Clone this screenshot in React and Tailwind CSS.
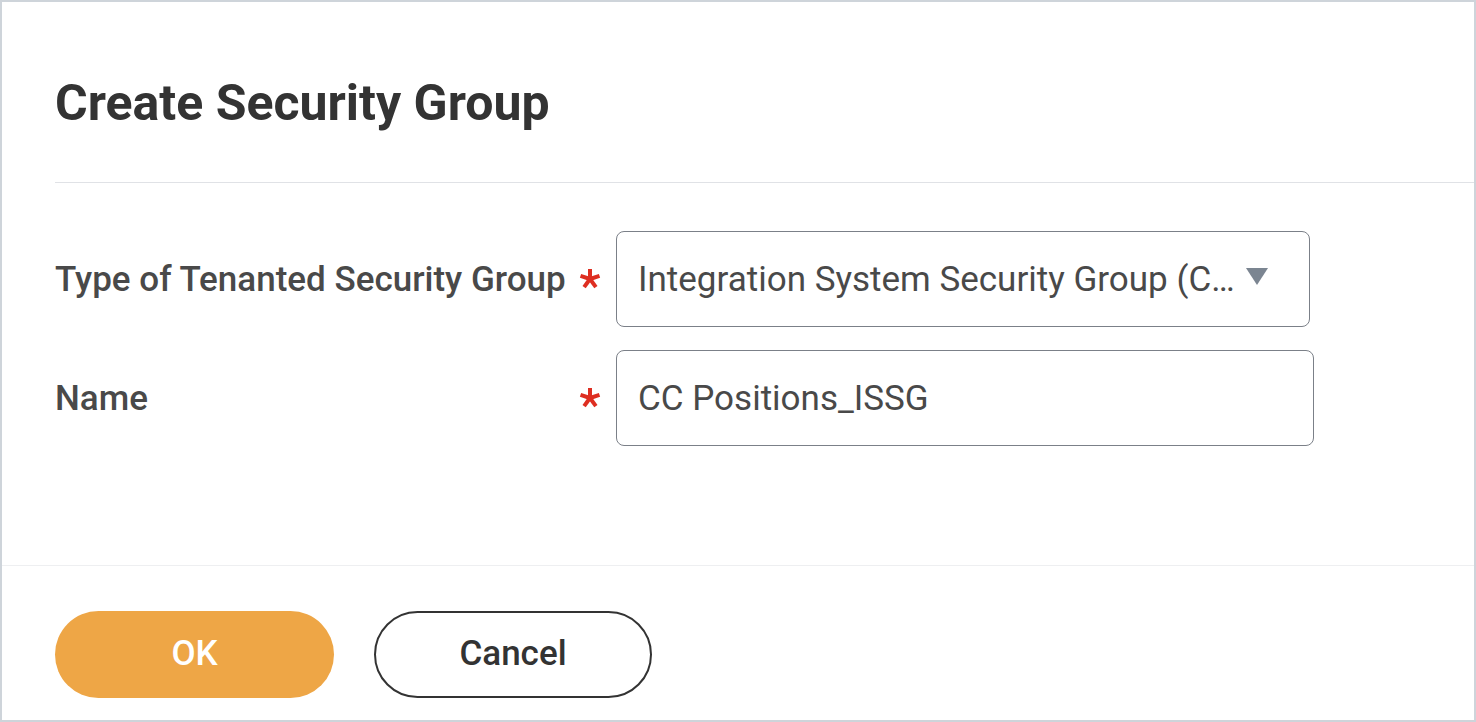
import React from "react";

function Asterisk() {
  return (
    <svg width="22" height="20" viewBox="-11 -10 22 20" className="block">
      <g stroke="#de2e21" strokeWidth="4" strokeLinecap="butt">
        <line x1="0" y1="0" x2="0" y2="-10" />
        <line x1="0" y1="0" x2="9.5" y2="-3.1" />
        <line x1="0" y1="0" x2="-9.5" y2="-3.1" />
        <line x1="0" y1="0" x2="5.9" y2="8.1" />
        <line x1="0" y1="0" x2="-5.9" y2="8.1" />
      </g>
    </svg>
  );
}

export default function App() {
  return (
    <div
      className="w-[1476px] h-[722px] border-2 border-[#ced4da] bg-white flex flex-col box-border overflow-hidden"
      style={{ fontFamily: "Roboto, 'Liberation Sans', sans-serif" }}
    >
      <div className="ml-[53px] h-[181px] border-b border-[#e0e2e6] pt-[73px]">
        <h1 className="text-[50px] leading-[56px] font-bold text-[#333333] m-0">
          Create Security Group
        </h1>
      </div>

      <div className="flex-1 pl-[53px] pt-[48px] flex flex-col gap-[23px]">
        <div className="flex items-center h-[96px]">
          <div className="w-[520px] text-[35px] font-medium text-[#494949] leading-none">
            Type of Tenanted Security Group
          </div>
          <div className="w-[30px] flex justify-center">
            <Asterisk />
          </div>
          <div className="ml-[11px] w-[694px] h-[96px] border border-[#7b8088] rounded-[8px] flex items-center pl-[21px] pr-[40px] relative">
            <span className="text-[35px] text-[#494949] leading-none whitespace-nowrap">
              Integration System Security Group (C…
            </span>
            <svg
              width="22"
              height="17"
              viewBox="0 0 22 17"
              className="absolute right-[41px] top-[36px]"
            >
              <polygon points="0,0 22,0 11,17" fill="#7b8591" />
            </svg>
          </div>
        </div>

        <div className="flex items-center h-[96px]">
          <div className="w-[520px] text-[35px] font-medium text-[#494949] leading-none">
            Name
          </div>
          <div className="w-[30px] flex justify-center">
            <Asterisk />
          </div>
          <div className="ml-[11px] w-[698px] h-[96px] border border-[#7b8088] rounded-[8px] flex items-center pl-[21px]">
            <span className="text-[35px] text-[#494949] leading-none whitespace-nowrap">
              CC Positions_ISSG
            </span>
          </div>
        </div>
      </div>

      <div className="h-[155px] border-t border-[#eeeff1] pl-[53px] pt-[45px] flex gap-[40px] items-start">
        <button className="w-[279px] h-[87px] rounded-full bg-[#eea646] text-white text-[35px] font-medium flex items-center justify-center">
          OK
        </button>
        <button className="w-[278px] h-[87px] rounded-full border-2 border-[#333333] bg-white text-[#333333] text-[35px] font-medium flex items-center justify-center">
          Cancel
        </button>
      </div>
    </div>
  );
}
